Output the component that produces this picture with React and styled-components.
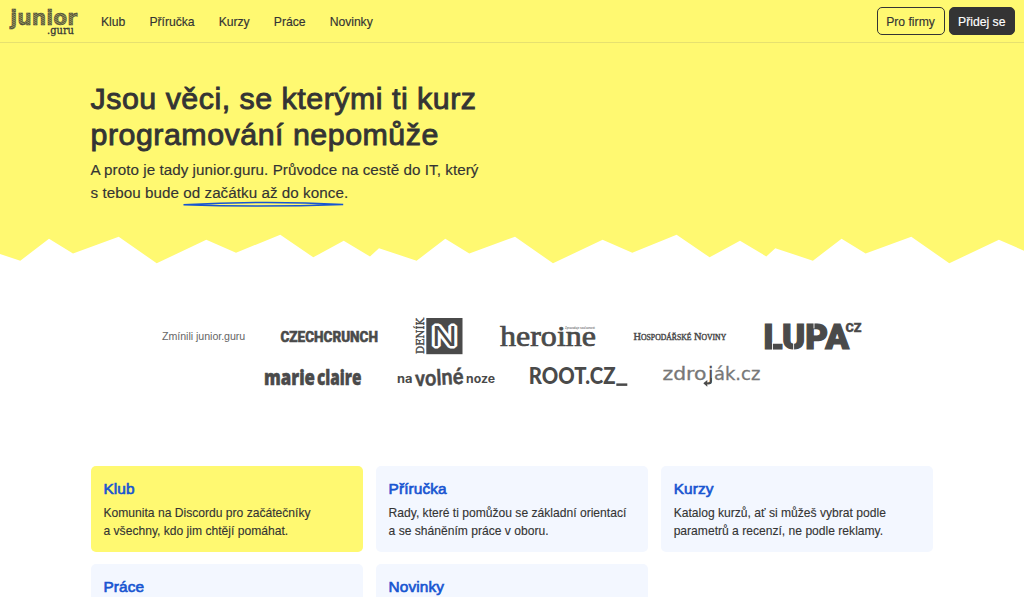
import React from 'react';
import styled, { createGlobalStyle } from 'styled-components';

const GlobalStyle = createGlobalStyle`
  * { box-sizing: border-box; }
  body {
    margin: 0;
    background: #fff;
    color: #343434;
    font-family: "Liberation Sans", Arial, sans-serif;
    overflow: hidden;
  }
  h1, h2, p { margin: 0; }
  a { color: inherit; text-decoration: none; }
`;

const Page = styled.div`
  height: 597px;
  overflow: hidden;
`;

const Navbar = styled.header`
  height: 43px;
  display: flex;
  align-items: center;
  padding: 0 9px 0 8px;
  background: #fff971;
  border-bottom: 1px solid #e6e170;
`;

const Brand = styled.a`
  display: flex;
  margin-right: 24px;

  svg { overflow: visible; }
`;

const Nav = styled.nav`
  display: flex;
  flex: 1;
  gap: 24.2px;
  padding-top: 1px;
  font-size: 12.2px;
  letter-spacing: -0.04px;
  -webkit-text-stroke: 0.15px currentColor;
`;

const Actions = styled.div`
  display: flex;
  gap: 4px;
`;

const Button = styled.a`
  width: ${(p) => (p.$solid ? 66.5 : 68)}px;
  height: 28.5px;
  display: flex;
  align-items: center;
  justify-content: center;
  padding-top: 1px;
  border: 1px solid #343434;
  border-radius: 5px;
  font-size: 12.2px;
  background: ${(p) => (p.$solid ? '#343434' : 'transparent')};
  color: ${(p) => (p.$solid ? '#fff' : '#343434')};
  -webkit-text-stroke: 0.15px currentColor;
`;

const Hero = styled.section`
  height: 191px;
  padding: 37px 90.5px 0;
  background: #fff971;
`;

const Title = styled.h1`
  font-size: 30.4px;
  line-height: 36px;
  font-weight: 400;
  letter-spacing: 0.5px;
  -webkit-text-stroke: 0.9px currentColor;
`;

const Lead = styled.p`
  margin-top: 6px;
  font-size: 15.2px;
  line-height: 23px;
  letter-spacing: 0.05px;
  white-space: nowrap;
  -webkit-text-stroke: 0.15px currentColor;
`;

const Underlined = styled.span`
  position: relative;
  display: inline-block;

  svg {
    position: absolute;
    left: 0;
    bottom: -4px;
    width: 100%;
    height: 7px;
    overflow: visible;
  }
`;

const Zigzag = styled.svg`
  display: block;
  width: 100%;
  height: 30px;
`;

const Mentions = styled.section`
  padding-top: 54px;
  height: 202px;
  display: flex;
  flex-direction: column;
`;

const MentionRow = styled.div`
  display: flex;
  justify-content: center;
  align-items: center;
  gap: 35.4px;
  height: ${(p) => p.$height}px;
  color: #4a4a4a;
`;

const MentionLabel = styled.span`
  width: 83px;
  font-size: 10.65px;
  letter-spacing: -0.04px;
  white-space: nowrap;
  color: #666;
`;

const Logo = styled.svg`
  display: block;
  height: 40px;
  overflow: visible;
  fill: currentColor;
`;

const Cards = styled.main`
  margin: 0 90.7px;
  display: grid;
  grid-template-columns: repeat(3, 1fr);
  gap: 12.4px 12.6px;
`;

const Card = styled.article`
  height: 86px;
  padding: 12px 12.8px;
  border-radius: 5px;
  background: ${(p) => (p.$highlight ? '#fff971' : '#f3f7ff')};
`;

const CardTitle = styled.h2`
  font-size: 15.4px;
  line-height: 21px;
  font-weight: 400;
  letter-spacing: 0.1px;
  color: #1755d1;
  -webkit-text-stroke: 0.65px currentColor;
`;

const CardText = styled.p`
  margin-top: 5px;
  font-size: 12.1px;
  line-height: 18.3px;
  white-space: nowrap;
  -webkit-text-stroke: 0.12px currentColor;
`;

const JuniorGuruLogo = () => (
  <svg width="69" height="32" viewBox="0 0 69 32">
    <defs>
      <pattern id="hatch" width="2.2" height="1.7" patternUnits="userSpaceOnUse" patternTransform="rotate(-28)">
        <rect width="2.2" height="1.7" fill="#343434" fillOpacity="0.45" />
        <rect width="2.2" height="0.9" fill="#343434" fillOpacity="0.7" />
      </pattern>
    </defs>
    <text x="2.2" y="20.3" textLength="67" lengthAdjust="spacingAndGlyphs" fontFamily="DejaVu Sans" fontWeight="700"
      fontSize="22" fill="url(#hatch)" stroke="#343434" strokeWidth="0.45">junior</text>
    <text x="39" y="28.8" textLength="27" lengthAdjust="spacingAndGlyphs" fontFamily="DejaVu Serif" fontSize="11.5"
      fill="#343434" stroke="#343434" strokeWidth="0.3">.guru</text>
  </svg>
);

const Word = ({ w = 97.5, x = 0, children, ...rest }) => (
  <text x={x} textLength={w} lengthAdjust="spacingAndGlyphs" {...rest}>{children}</text>
);

const CzechCrunch = () => (
  <Logo width="97.5" viewBox="0 0 97.5 40">
    <Word x={0.5} y="25.6" fontFamily="Roboto" fontWeight="800" fontSize="15.2" stroke="currentColor" strokeWidth="0.6">CZECHCRUNCH</Word>
  </Logo>
);

const DenikN = () => (
  <Logo width="50" viewBox="0 0 50 40">
    <g transform="translate(10.8 38) rotate(-90)">
      <Word y="0" w={36} fontFamily="DejaVu Serif" fontSize="11.5" stroke="currentColor" strokeWidth="0.4">DENÍK</Word>
    </g>
    <rect x="13.3" y="2" width="36.2" height="36.2" />
    <text x="18.9" y="30.3" textLength="25" lengthAdjust="spacingAndGlyphs" fontFamily="Liberation Sans"
      fontSize="29" fill="#4a4a4a" stroke="#fff" strokeWidth="5" strokeLinejoin="bevel" paintOrder="stroke">N</text>
  </Logo>
);

const Heroine = () => (
  <Logo width="97.5" viewBox="0 0 97.5 40">
    <Word x={1} y="30" w={96} fontFamily="Liberation Serif" fontSize="28.5" stroke="currentColor" strokeWidth="0.7">heroine</Word>
    <Word x={66} y="13" w={30} fontFamily="Liberation Sans" fontSize="3.4">Zpravodaje současnosti</Word>
  </Logo>
);

const Hospodarske = () => (
  <Logo width="97.5" viewBox="0 0 97.5 40">
    <Word x={1.5} y="24" w={7.5} fontFamily="Liberation Serif" fontSize="11" stroke="currentColor" strokeWidth="0.45">H</Word>
    <Word x={9} y="24" w={50.5} fontFamily="Liberation Serif" fontSize="9" stroke="currentColor" strokeWidth="0.45">OSPODÁŘSKÉ</Word>
    <Word x={62} y="24" w={7.5} fontFamily="Liberation Serif" fontSize="11" stroke="currentColor" strokeWidth="0.45">N</Word>
    <Word x={69.5} y="24" w={24.7} fontFamily="Liberation Serif" fontSize="9" stroke="currentColor" strokeWidth="0.45">OVINY</Word>
  </Logo>
);

const Lupa = () => (
  <Logo width="97.5" viewBox="0 0 97.5 40">
    <Word x={-0.5} y="32.6" w={85.5} fontFamily="Roboto" fontWeight="900" fontSize="34.5" stroke="currentColor" strokeWidth="1.2">LUPA</Word>
    <Word x={81.5} y="15.6" w={16} fontFamily="Roboto" fontWeight="900" fontSize="12" stroke="currentColor" strokeWidth="0.3">CZ</Word>
    <path d="M8.5 26.4v8M29.6 26v8M50 6.5v6" stroke="#fff" strokeWidth="0.9" />
  </Logo>
);

const MarieClaire = () => (
  <Logo width="97.5" viewBox="0 0 97.5 40">
    <Word y="29" w={51} fontFamily="Open Sans" fontWeight="800" fontSize="21.5" stroke="currentColor" strokeWidth="0.5">marie</Word>
    <Word x={53} w={44.5} y="29" fontFamily="Open Sans" fontWeight="800" fontSize="21.5" stroke="currentColor" strokeWidth="0.5">claire</Word>
  </Logo>
);

const NaVolneNoze = () => (
  <Logo width="97.5" viewBox="0 0 97.5 40">
    <Word y="27" w={15.5} fontFamily="Inter" fontWeight="700" fontSize="11.5">na</Word>
    <g transform="rotate(-3 42 22)">
      <Word x={18} y="29" w={48.5} fontFamily="Roboto" fontWeight="500" fontSize="21.5" stroke="currentColor" strokeWidth="0.5">volné</Word>
    </g>
    <Word x={69} y="27" w={29} fontFamily="Inter" fontWeight="700" fontSize="11.5">noze</Word>
  </Logo>
);

const RootCz = () => (
  <Logo width="97.5" viewBox="0 0 97.5 40">
    <Word x={-1.2} y="28" w={86.7} fontFamily="Lato" fontWeight="900" fontSize="22">ROOT.CZ</Word>
    <rect x="86.3" y="27.4" width="11" height="2.5" />
  </Logo>
);

const Zdrojak = () => (
  <Logo width="97.5" viewBox="0 0 97.5 40">
    <g fill="#777" stroke="#777" strokeWidth="0.3" fontFamily="DejaVu Sans" fontSize="17">
      <Word x={-0.5} y="23.6" w={44}>zdro</Word>
      <Word x={51} y="23.6" w={46.3}>ák.cz</Word>
    </g>
    <Word x={45.2} y="23.6" w={5} fontFamily="DejaVu Sans" fontSize="17" stroke="currentColor" strokeWidth="0.3">j</Word>
    <path d="M48 22v3.5q0 1.8-2 1.8h-3" fill="none" stroke="currentColor" strokeWidth="1.7" />
    <path d="M40.3 27.3l4-3.4v6.8z" />
  </Logo>
);

// One tile of the torn edge, as offsets from its left side
const TILE = [
  [20.3, 26.7], [49, 4.8], [73, 19.5], [118.7, 2.7], [156.7, 29.3], [206.3, 5.7], [236, 18.7],
  [280.3, 0.8], [313.3, 23.3], [343.7, 6.7], [370, 22.5], [379, 14.2],
];
const TILE_WIDTH = 396.3;
const edge = [0, 1, 2]
  .flatMap((i) => TILE.map(([x, y]) => `${x + i * TILE_WIDTH},${y}`))
  .join(' ');

const CARDS = [
  { title: 'Klub', lines: ['Komunita na Discordu pro začátečníky', 'a všechny, kdo jim chtějí pomáhat.'], highlight: true },
  { title: 'Příručka', lines: ['Rady, které ti pomůžou se základní orientací', 'a se sháněním práce v oboru.'] },
  { title: 'Kurzy', lines: ['Katalog kurzů, ať si můžeš vybrat podle', 'parametrů a recenzí, ne podle reklamy.'] },
  { title: 'Práce', lines: [] },
  { title: 'Novinky', lines: [] },
];

export default function App() {
  return (
    <Page>
      <GlobalStyle />
      <Navbar>
        <Brand href="#"><JuniorGuruLogo /></Brand>
        <Nav>
          {['Klub', 'Příručka', 'Kurzy', 'Práce', 'Novinky'].map((t) => <a href="#" key={t}>{t}</a>)}
        </Nav>
        <Actions>
          <Button href="#">Pro firmy</Button>
          <Button href="#" $solid>Přidej se</Button>
        </Actions>
      </Navbar>
      <Hero>
        <Title>Jsou věci, se kterými ti kurz<br />programování nepomůže</Title>
        <Lead>
          A proto je tady junior.guru. Průvodce na cestě do IT, který<br />
          s tebou bude{' '}
          <Underlined>
            od začátku až do konce
            <svg viewBox="0 0 161 7" preserveAspectRatio="none">
              <path d="M0.5 3.8Q80 -0.6 160.5 3.4Q80 6.4 0.5 3.8" fill="none" stroke="#1755d1" strokeWidth="1.5" />
            </svg>
          </Underlined>.
        </Lead>
      </Hero>
      <Zigzag viewBox="0 0 1024 30" preserveAspectRatio="none">
        <polygon points={`0,0 0,20 ${edge} 1200,0`} fill="#fff971" />
      </Zigzag>
      <Mentions>
        <MentionRow $height={36}>
          <MentionLabel>Zmínili junior.guru</MentionLabel>
          <CzechCrunch /><DenikN /><Heroine /><Hospodarske /><Lupa />
        </MentionRow>
        <MentionRow $height={44}>
          <MarieClaire /><NaVolneNoze /><RootCz /><Zdrojak />
        </MentionRow>
      </Mentions>
      <Cards>
        {CARDS.map(({ title, lines, highlight }) => (
          <Card key={title} $highlight={highlight}>
            <CardTitle>{title}</CardTitle>
            {lines.length > 0 && <CardText>{lines[0]}<br />{lines[1]}</CardText>}
          </Card>
        ))}
      </Cards>
    </Page>
  );
}
